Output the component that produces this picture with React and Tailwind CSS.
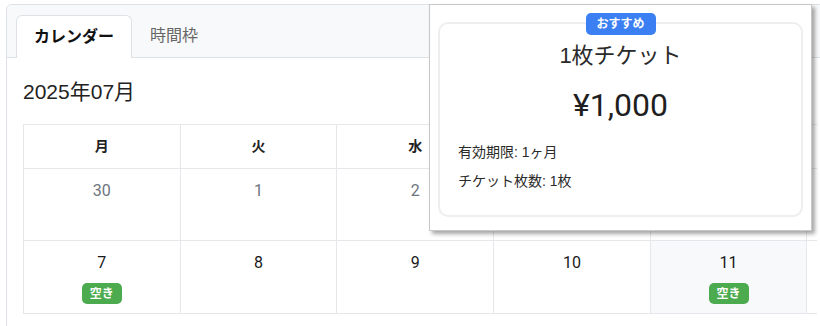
import React from "react";

const FONT = { fontFamily: '"Liberation Sans", "Noto Sans CJK JP", sans-serif' };
const NUM = { fontFamily: 'Roboto, "Noto Sans CJK JP", sans-serif' };

const days = ["月", "火", "水", "木", "金"];
const row1 = ["30", "1", "2", "3", "4"];
const row2 = [
  { d: "7", free: true },
  { d: "8" },
  { d: "9" },
  { d: "10" },
  { d: "11", free: true, today: true },
];

function Cell({ children, className = "" }) {
  return (
    <div className={"border-r border-b border-[#e5e7eb] flex flex-col items-center " + className}>
      {children}
    </div>
  );
}

function Stub({ h }) {
  return <div className={"border-b border-[#e5e7eb] " + h} />;
}

export default function App() {
  return (
    <div className="relative w-[820px] h-[326px] overflow-hidden bg-white text-[#212529]" style={FONT}>
      <div className="ml-[6px] mt-[4px] w-[830px] h-[340px] border border-[#dee2e6] rounded-tl-[6px] bg-white">
        {/* Tabs */}
        <div className="h-[53px] bg-[#f8f9fa] border-b border-[#dee2e6] rounded-tl-[6px] flex items-end pl-[9px]">
          <div className="h-[43px] px-[17px] bg-white border border-b-0 border-[#dee2e6] rounded-t-[6px] -mb-px flex items-center text-[16px] font-bold text-[#111]">
            カレンダー
          </div>
          <div className="h-[43px] px-[18px] flex items-center text-[16px] text-[#666]">時間枠</div>
        </div>
        {/* Content */}
        <div className="pl-[16px] pt-[20px]">
          <div className="text-[21px] leading-[28px] text-[#222]">2025年07月</div>
          <div className="mt-[18px] grid grid-cols-[repeat(5,156.7px)_10px] border-l border-t border-[#e5e7eb] w-[794px]">
            {days.map((d) => (
              <Cell key={d} className="h-[44px] justify-center">
                <span className="text-[14px] font-bold text-[#222]">{d}</span>
              </Cell>
            ))}
            <Stub h="h-[44px]" />
            {row1.map((d) => (
              <Cell key={"r1" + d} className="h-[72px] pt-[10px]">
                <span className="text-[16px] leading-[24px] text-[#6c757d]" style={NUM}>{d}</span>
              </Cell>
            ))}
            <Stub h="h-[72px]" />
            {row2.map((c) => (
              <Cell key={"r2" + c.d} className={"h-[73px] pt-[10px] " + (c.today ? "bg-[#f8f9fa]" : "")}>
                <span className="text-[16px] leading-[24px] text-[#1a1a1a]" style={NUM}>{c.d}</span>
                {c.free && (
                  <span className="mt-[8px] h-[21px] px-[8px] rounded-[5px] bg-[#4caa4f] text-white text-[12px] font-bold flex items-center">
                    空き
                  </span>
                )}
              </Cell>
            ))}
            <Stub h="h-[73px]" />
          </div>
        </div>
      </div>

      {/* Popover */}
      <div className="absolute left-[429px] top-[4px] w-[383px] h-[227px] bg-white border border-[#c8c8c8] shadow-[3px_3px_4px_rgba(0,0,0,0.35)] p-[8px] pt-[17px]">
        <div className="relative h-[195px] border-2 border-[#eceef0] rounded-[10px] flex flex-col">
          <div className="absolute left-1/2 -translate-x-1/2 -top-[11px] h-[22px] px-[11px] rounded-[5px] bg-[#3b7ff3] text-white text-[12px] font-bold flex items-center">
            おすすめ
          </div>
          <div className="mt-[17px] text-center text-[22px] leading-[30px] text-[#2a2a2a]">1枚チケット</div>
          <div className="mt-[16px] text-center text-[32px] leading-[36px] text-[#1f1f1f]" style={NUM}>
            ¥1,000
          </div>
          <div className="mt-[19px] pl-[18px] text-[14px] leading-[20px] text-[#2a2a2a]">有効期限: 1ヶ月</div>
          <div className="mt-[9px] pl-[18px] text-[14px] leading-[20px] text-[#2a2a2a]">チケット枚数: 1枚</div>
        </div>
      </div>
    </div>
  );
}
